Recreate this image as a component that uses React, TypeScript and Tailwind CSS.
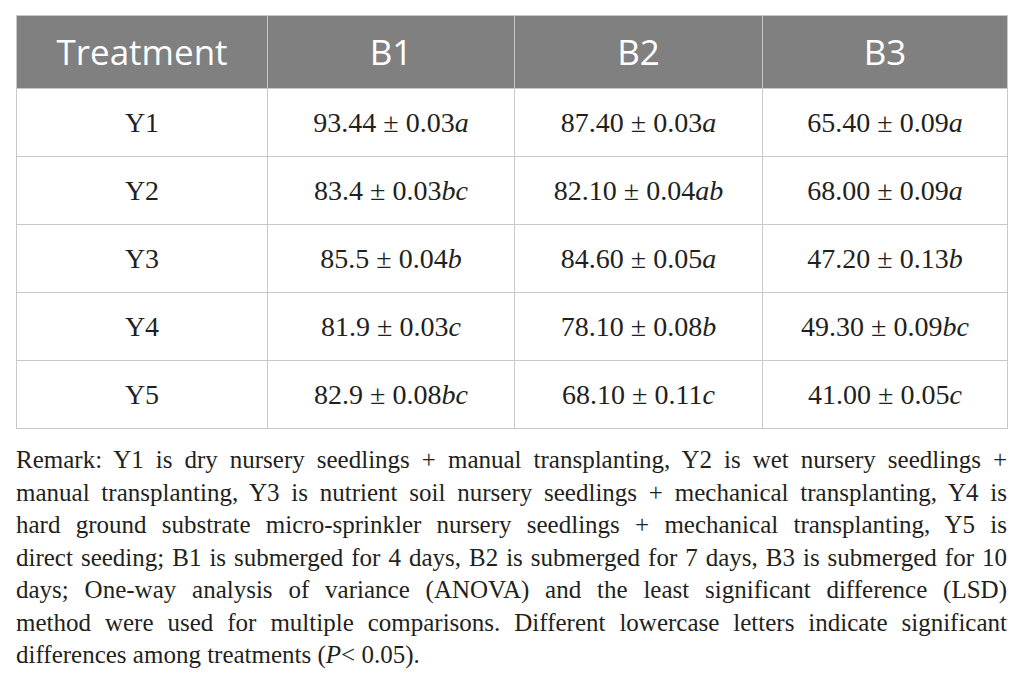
const rows = [
  { t: 'Y1', cells: [['93.44 ± 0.03', 'a'], ['87.40 ± 0.03', 'a'], ['65.40 ± 0.09', 'a']] },
  { t: 'Y2', cells: [['83.4 ± 0.03', 'bc'], ['82.10 ± 0.04', 'ab'], ['68.00 ± 0.09', 'a']] },
  { t: 'Y3', cells: [['85.5 ± 0.04', 'b'], ['84.60 ± 0.05', 'a'], ['47.20 ± 0.13', 'b']] },
  { t: 'Y4', cells: [['81.9 ± 0.03', 'c'], ['78.10 ± 0.08', 'b'], ['49.30 ± 0.09', 'bc']] },
  { t: 'Y5', cells: [['82.9 ± 0.08', 'bc'], ['68.10 ± 0.11', 'c'], ['41.00 ± 0.05', 'c']] },
]

const remark = [
  'Remark: Y1 is dry nursery seedlings + manual transplanting, Y2 is wet nursery seedlings +',
  'manual transplanting, Y3 is nutrient soil nursery seedlings + mechanical transplanting, Y4 is',
  'hard ground substrate micro-sprinkler nursery seedlings + mechanical transplanting, Y5 is',
  'direct seeding; B1 is submerged for 4 days, B2 is submerged for 7 days, B3 is submerged for 10',
  'days; One-way analysis of variance (ANOVA) and the least significant difference (LSD)',
  'method were used for multiple comparisons. Different lowercase letters indicate significant',
]

export default function App() {
  return (
    <div className="min-h-screen bg-white pt-[15px] px-4 text-[#231f20]">
      <table className="w-[991px] table-fixed border-collapse">
        <colgroup>
          <col className="w-[251px]" />
          <col className="w-[247px]" />
          <col className="w-[248px]" />
          <col className="w-[245px]" />
        </colgroup>
        <thead>
          <tr className="h-[73px] bg-[#7f807f] text-white font-['Open_Sans',sans-serif] text-[35px]">
            {['Treatment', 'B1', 'B2', 'B3'].map((h) => (
              <th key={h} className="border border-[#c8c8c8] font-normal text-center align-middle">
                {h}
              </th>
            ))}
          </tr>
        </thead>
        <tbody className="font-['Liberation_Serif',serif] text-[28px]">
          {rows.map((r) => (
            <tr key={r.t} className="h-[68px]">
              <td className="border border-[#c8c8c8] text-center align-middle">{r.t}</td>
              {r.cells.map(([v, l], i) => (
                <td key={i} className="border border-[#c8c8c8] text-center align-middle">
                  {v}
                  <i>{l}</i>
                </td>
              ))}
            </tr>
          ))}
        </tbody>
      </table>

      <div className="w-[991px] mt-[15px] font-['Liberation_Serif',serif] text-[25px] leading-[32.5px]">
        {remark.map((line) => (
          <div key={line} className="whitespace-nowrap text-justify [text-align-last:justify]">
            {line}
          </div>
        ))}
        <div>
          differences among treatments (<i>P</i>&lt; 0.05).
        </div>
      </div>
    </div>
  )
}
